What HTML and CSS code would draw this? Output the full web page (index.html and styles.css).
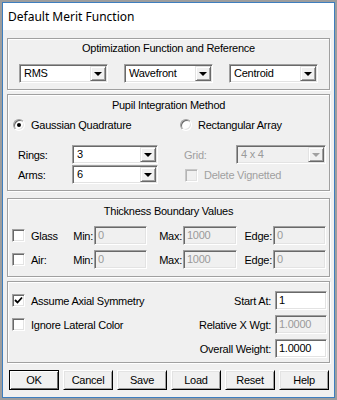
FILE: index.html
```html
<!DOCTYPE html>
<html lang="en">
<head>
    <meta charset="UTF-8">
    <meta name="viewport" content="width=device-width, initial-scale=1.0">
    <title>Default Merit Function</title>
    <link rel="stylesheet" href="styles.css">
</head>
<body>
    <div class="window">
        <div class="titlebar">Default Merit Function</div>

        <div class="dialog">
            <div class="group group-opt">
                <div class="group-title">Optimization Function and Reference</div>
                <div class="opt-row">
                    <div class="combo"><span class="combo-text">RMS</span><span class="combo-btn"><span class="arrow"></span></span></div>
                    <div class="combo"><span class="combo-text">Wavefront</span><span class="combo-btn"><span class="arrow"></span></span></div>
                    <div class="combo"><span class="combo-text">Centroid</span><span class="combo-btn"><span class="arrow"></span></span></div>
                </div>
            </div>

            <div class="group group-pupil">
                <div class="group-title">Pupil Integration Method</div>
                <div class="radio-row">
                    <div class="radio-item radio-left"><span class="radio checked"></span>Gaussian Quadrature</div>
                    <div class="radio-item"><span class="radio"></span>Rectangular Array</div>
                </div>
                <div class="pupil-grid">
                    <div class="field field-left">
                        <span class="field-label">Rings:</span>
                        <div class="combo combo-rings"><span class="combo-text">3</span><span class="combo-btn"><span class="arrow"></span></span></div>
                    </div>
                    <div class="field field-right">
                        <span class="field-label disabled">Grid:</span>
                        <div class="combo combo-grid disabled"><span class="combo-text">4 x 4</span><span class="combo-btn"><span class="arrow"></span></span></div>
                    </div>

                    <div class="field field-left">
                        <span class="field-label">Arms:</span>
                        <div class="combo combo-rings"><span class="combo-text">6</span><span class="combo-btn"><span class="arrow"></span></span></div>
                    </div>
                    <div class="check-item vignetted disabled"><span class="checkbox"></span>Delete Vignetted</div>
                </div>
            </div>

            <div class="group group-thick">
                <div class="group-title">Thickness Boundary Values</div>
                <div class="thick-grid">
                    <div class="check-item"><span class="checkbox"></span>Glass</div>
                    <span class="thick-label">Min:</span>
                    <div class="textbox disabled">0</div>
                    <span class="thick-label">Max:</span>
                    <div class="textbox disabled">1000</div>
                    <span class="thick-label">Edge:</span>
                    <div class="textbox disabled">0</div>

                    <div class="check-item"><span class="checkbox"></span>Air:</div>
                    <span class="thick-label">Min:</span>
                    <div class="textbox disabled">0</div>
                    <span class="thick-label">Max:</span>
                    <div class="textbox disabled">1000</div>
                    <span class="thick-label">Edge:</span>
                    <div class="textbox disabled">0</div>
                </div>
            </div>

            <div class="group group-misc">
                <div class="misc-grid">
                    <div class="check-item"><span class="checkbox checked"><svg width="9" height="9" viewBox="0 0 9 9"><path d="M1 4 L3.5 6.5 L8 1.5" fill="none" stroke="#000" stroke-width="1.8"/></svg></span>Assume Axial Symmetry</div>
                    <span class="misc-label">Start At:</span>
                    <div class="textbox">1</div>

                    <div class="check-item"><span class="checkbox"></span>Ignore Lateral Color</div>
                    <span class="misc-label">Relative X Wgt:</span>
                    <div class="textbox disabled">1.0000</div>

                    <div></div>
                    <span class="misc-label">Overall Weight:</span>
                    <div class="textbox">1.0000</div>
                </div>
            </div>

            <div class="button-row">
                <button class="btn btn-default">OK</button>
                <button class="btn">Cancel</button>
                <button class="btn">Save</button>
                <button class="btn">Load</button>
                <button class="btn">Reset</button>
                <button class="btn">Help</button>
            </div>
        </div>
    </div>
</body>
</html>
```

FILE: styles.css
```css
body {
    margin: 0;
    background-color: #9d9d9d;
    font-family: 'Liberation Sans', Arial, sans-serif;
    font-size: 11px;
    letter-spacing: -0.25px;
    color: #000;
}

.window {
    margin: 2px;
    border: 1px solid #3d7ebf;
    background-color: #f0f0f0;
}

.titlebar {
    height: 27px;
    line-height: 27px;
    padding-left: 5px;
    background-color: #fff;
    font-family: 'Noto Sans', 'Liberation Sans', sans-serif;
    font-size: 12px;
    letter-spacing: 0;
}

.dialog {
    padding: 8px 4px 7px 4px;
}

/* etched group boxes */
.group {
    border: 1px solid #a0a0a0;
    box-shadow: inset 1px 1px #fff, 1px 1px #fff;
    padding: 0 4px;
}

.group-title {
    text-align: center;
    height: 14px;
    line-height: 14px;
}

.group-opt {
    padding-top: 2px;
    padding-bottom: 6px;
}

.group-opt .group-title {
    margin-bottom: 9px;
}

.opt-row {
    display: flex;
    gap: 16px;
    padding-left: 7px;
}

.group-pupil {
    margin-top: 4px;
    padding-top: 3px;
    padding-bottom: 6px;
}

.group-pupil .group-title {
    margin-bottom: 6px;
}

.group-thick {
    margin-top: 7px;
    padding-top: 5px;
    padding-bottom: 7px;
}

.group-thick .group-title {
    margin-bottom: 8px;
}

.group-misc {
    margin-top: 4px;
    padding-top: 9px;
    padding-bottom: 4px;
}

/* combo boxes */
.combo {
    position: relative;
    width: 89px;
    height: 19px;
    box-sizing: border-box;
    border: 1px solid;
    border-color: #a0a0a0 #fff #fff #a0a0a0;
    box-shadow: inset 1px 1px #696969, inset -1px -1px #e3e3e3;
    background-color: #fff;
}

.combo-text {
    display: block;
    padding-left: 4px;
    line-height: 17px;
}

.combo-btn {
    position: absolute;
    top: 1px;
    right: 1px;
    width: 16px;
    height: 15px;
    box-sizing: border-box;
    background-color: #f0f0f0;
    border: 1px solid;
    border-color: #e3e3e3 #696969 #696969 #e3e3e3;
    box-shadow: inset 1px 1px #fff, inset -1px -1px #a0a0a0;
    display: flex;
    align-items: center;
    justify-content: center;
}

.arrow {
    width: 0;
    height: 0;
    border-left: 4px solid transparent;
    border-right: 4px solid transparent;
    border-top: 4px solid #000;
    margin-top: 1px;
}

.combo.disabled {
    background-color: #f0f0f0;
    color: #9a9a9a;
}

.combo.disabled .arrow {
    border-top-color: #a0a0a0;
}

.combo-rings {
    width: 86px;
}

.combo-grid {
    width: 90px;
}

/* pupil section */
.radio-row {
    display: flex;
    height: 14px;
    margin-bottom: 13px;
}

.radio-left {
    width: 166px;
}

.pupil-grid {
    display: grid;
    grid-template-columns: 166px 1fr;
    grid-template-rows: 19px 19px;
    row-gap: 1px;
}

.radio-item,
.check-item {
    display: flex;
    align-items: center;
    white-space: nowrap;
}

.radio-item {
    padding-left: 1px;
}

.radio {
    width: 12px;
    height: 12px;
    box-sizing: border-box;
    border-radius: 50%;
    border: 1px solid;
    border-color: #a0a0a0 #fff #fff #a0a0a0;
    box-shadow: inset 1px 1px #696969, inset -1px -1px #e3e3e3;
    background-color: #fff;
    margin-right: 6px;
    display: flex;
    align-items: center;
    justify-content: center;
}

.radio.checked::after {
    content: "";
    width: 4px;
    height: 4px;
    border-radius: 50%;
    background-color: #000;
}

.field {
    display: flex;
    align-items: center;
}

.field-left .field-label {
    width: 54px;
    padding-left: 6px;
}

.field-right .field-label {
    width: 52px;
    padding-left: 6px;
}

.field-label.disabled,
.check-item.disabled {
    color: #a0a0a0;
}

.vignetted {
    padding-left: 7px;
    margin-top: 1px;
}

/* check boxes */
.checkbox {
    width: 13px;
    height: 13px;
    box-sizing: border-box;
    border: 1px solid;
    border-color: #a0a0a0 #fff #fff #a0a0a0;
    box-shadow: inset 1px 1px #696969, inset -1px -1px #e3e3e3;
    background-color: #fff;
    margin-right: 6px;
    display: flex;
    align-items: center;
    justify-content: center;
}

.check-item.disabled .checkbox {
    background-color: #f0f0f0;
    border-color: #c8c8c8 #fff #fff #c8c8c8;
    box-shadow: inset 1px 1px #b4b4b4, inset -1px -1px #e3e3e3;
}

/* thickness section */
.thick-grid {
    display: grid;
    grid-template-columns: 60px 22px 53px 36px 54px 36px 53px;
    grid-template-rows: 19px 19px;
    row-gap: 5px;
    align-items: center;
}

.thick-label {
    text-align: right;
    padding-right: 1px;
}

/* text boxes */
.textbox {
    height: 19px;
    box-sizing: border-box;
    border: 1px solid;
    border-color: #a0a0a0 #fff #fff #a0a0a0;
    box-shadow: inset 1px 1px #696969, inset -1px -1px #e3e3e3;
    background-color: #fff;
    padding-left: 3px;
    line-height: 17px;
}

.textbox.disabled {
    background-color: #f0f0f0;
    color: #9a9a9a;
}

/* last group */
.misc-grid {
    display: grid;
    grid-template-columns: 1fr auto 52px;
    grid-template-rows: 19px 19px 19px;
    row-gap: 5px;
    align-items: center;
    margin-right: -2px;
}

.misc-label {
    text-align: right;
    padding-right: 4px;
}

/* buttons */
.button-row {
    display: flex;
    gap: 4px;
    margin-top: 7px;
    padding-left: 2px;
}

.btn {
    width: 50px;
    height: 20px;
    box-sizing: border-box;
    padding: 0;
    font-family: inherit;
    font-size: 11px;
    letter-spacing: -0.25px;
    color: #000;
    background-color: #f0f0f0;
    border: 1px solid;
    border-color: #fff #000 #000 #fff;
    box-shadow: inset 1px 1px #e3e3e3, inset -1px -1px #a0a0a0;
    border-radius: 0;
}

.btn-default {
    border-color: #000;
    box-shadow: inset 1px 1px #fff, inset -1px -1px #696969;
}
```
